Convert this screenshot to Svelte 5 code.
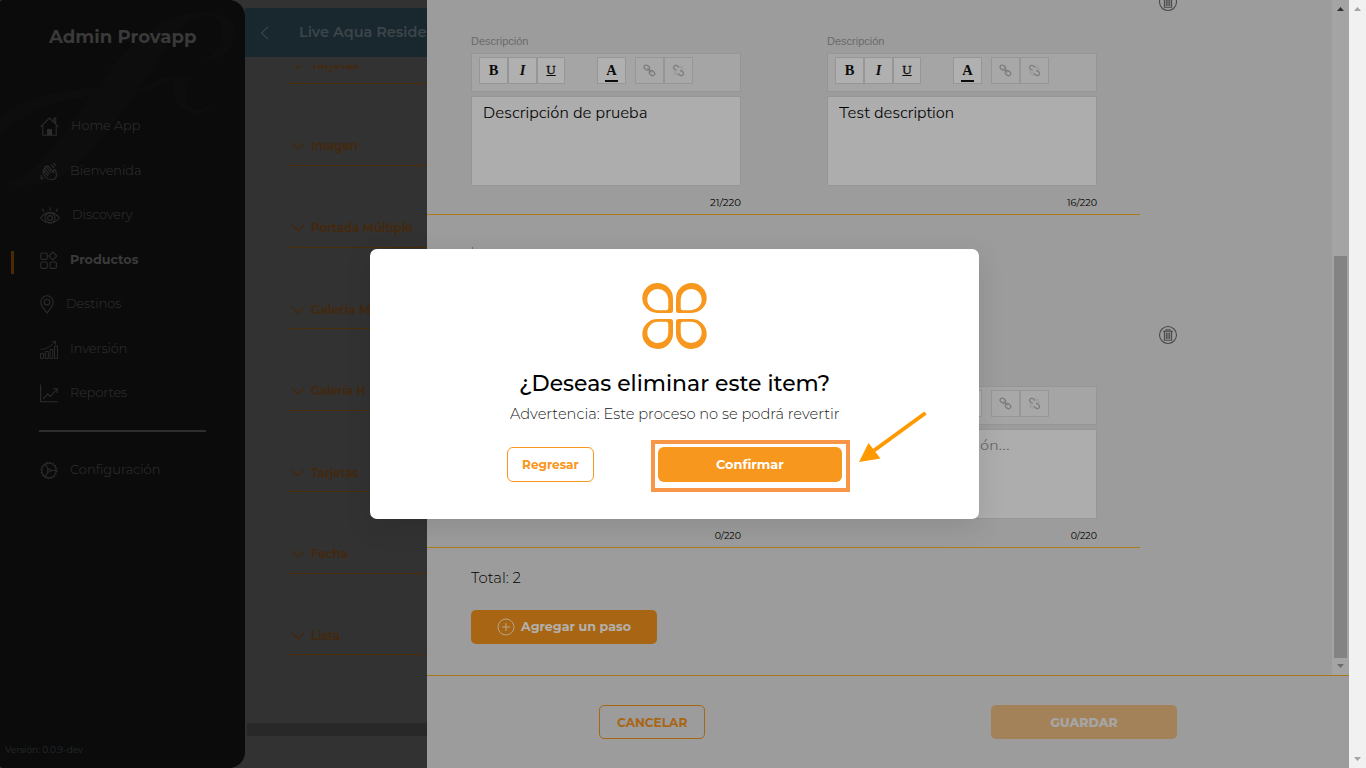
<script>
  const nav = [
    { icon: 'home', label: 'Home App', iconWidth: 19, width: 69 },
    { icon: 'hand', label: 'Bienvenida', iconWidth: 18, width: 71 },
    { icon: 'eye', label: 'Discovery', iconWidth: 20, width: 61 },
    { icon: 'grid', label: 'Productos', iconWidth: 18, width: 68.5, active: true },
    { icon: 'pin', label: 'Destinos', iconWidth: 14, width: 55 },
    { icon: 'bars', label: 'Inversión', iconWidth: 18, width: 57 },
    { icon: 'chart', label: 'Reportes', iconWidth: 18, width: 57 }
  ]

  const sections = [
    { label: 'Tarjetas', width: 48 },
    { label: 'Imagen', width: 47 },
    { label: 'Portada Múltiple', width: 102 },
    { label: 'Galería Múltiple', width: 100 },
    { label: 'Galería H', width: 55 },
    { label: 'Tarjetas', width: 48 },
    { label: 'Fecha', width: 37 },
    { label: 'Lista', width: 29 }
  ]

  const steps = [
    [
      { text: 'Descripción de prueba', width: 164, count: '21/220', countWidth: 31 },
      { text: 'Test description', width: 115, count: '16/220', countWidth: 30.5 }
    ],
    [
      { text: '', width: 0, count: '0/220', countWidth: 26 },
      { text: 'Ingrese la descripción...', width: 171, count: '0/220', countWidth: 26, placeholder: true }
    ]
  ]

  // stretches a label to its column width
  function fit(node, width) {
    const natural = node.offsetWidth
    if (!natural || !width) return
    node.style.transform = `scaleX(${width / natural})`
    node.style.marginRight = `${width - natural}px`
  }
</script>

{#snippet navIcon(name, width)}
  <svg class="nav-icon" {width} height="19" viewBox="0 0 {width} 19">
    {#if name === 'home'}
      <path d="M.5 9.8 9.5 1l9 8.8M2.8 9v9.3h13.4V9M14 4.8V1h1.7v5.5" />
      <path class="solid" d="M7 18v-6h5v6z" />
    {:else if name === 'hand'}
      <path d="M5.2 14.5C3.8 12.6 2.6 10.6 3 9.7c.5-.8 1.4.1 2 .9L8.3 14M5 10.5 3.5 7.8c-.3-1 .9-1.6 1.6-.6l4.2 5M5.2 7.3l-.6-2c.1-1.3 1.3-1.2 1.8-.3l4.7 5.7M7.2 6l-.4-1.7c.4-1 1.4-.5 1.9.3l5 6c.1-1.7-.2-2.7.7-3 1.5-.2 1.8 2.7 2 4.9.2 3-1.9 5-4.7 5.2-2.8.3-4.7-1-6.5-3.2" />
      <path d="M11 3.2c1.8.3 2.6 1.8 2.8 3M13 1.2c1.6.3 2.3 1.3 2.4 2.8M1 13c0 1.8 1 3 2.5 3.7M.7 15.2c.3 1 .7 1.6 1.5 2" />
    {:else if name === 'eye'}
      <path d="M.7 12C5 4.8 15 4.8 19.3 12 15 18.2 5 18.2.7 12zM10 1.2v3.5M2.3 2.7l1.8 3M17.7 2.7l-1.8 3" />
      <circle cx="10" cy="12" r="5" /><circle cx="10" cy="12" r="2.4" />
    {:else if name === 'grid'}
      <rect x=".8" y="2" width="6.4" height="6.4" rx="1.2" />
      <rect x=".8" y="11" width="6.4" height="6.4" rx="1.2" />
      <rect x="10" y="11" width="6.4" height="6.4" rx="1.2" />
      <path d="m12.8 1 4 4-4 4-4-4z" />
    {:else if name === 'pin'}
      <path d="M7 18C4.5 14.5.8 11 .8 7a6.2 6.2 0 0 1 12.4 0c0 4-3.7 7.5-6.2 11z" />
      <circle cx="7" cy="7" r="2.8" />
    {:else if name === 'bars'}
      <path class="fine" d="M.5 13.5h3v5h-3zM5.3 11.5h3v7h-3zM10 9.5h2.8v9H10zM14.5 6h3v12.5h-3zM.5 9.5C6 9.5 11 6 15.5 1.5M12.5 1.5h3v3" />
    {:else if name === 'chart'}
      <path d="M.6.5v17.3H18M3 15l4.8-5 2.5 2.5L17 5M13 4.8h4.2V9" />
    {:else}
      <circle cx="9" cy="9.5" r="7.2" />
      <circle cx="9" cy="9.5" r="8.1" stroke-dasharray="1.6 1.58" />
      <circle cx="9" cy="9.5" r="1.5" />
      <path d="M10.5 9.5h5.7M8.2 10.7l-2.9 5M8.2 8.2l-2.9-5" />
    {/if}
  </svg>
{/snippet}

{#snippet linkIcon(broken)}
  <svg width="13" height="13" viewBox="0 0 13 13" class="link-icon">
    {#if broken}
      <path d="M4.8 6C3 6.3 1.2 4.4 1.6 2.9 2.1 1 4.6.8 5.6 2.1L6.8 3.6M8 6.7c1.7-.3 3.8 1.5 3.4 3.2-.4 1.9-3 2.2-4.2.8L6 9.3" />
      <path class="thin" d="M8.5 4.5 11 2M8 3.5V1.3M9.5 5h2.5M4.5 8.5 2 11M5 9.5v2M3.5 8H1.3" />
    {:else}
      <rect x=".9" y="1.5" width="5.8" height="4.2" rx="2.1" transform="rotate(40 3.8 3.6)" />
      <rect x="6.1" y="7" width="5.8" height="4.2" rx="2.1" transform="rotate(40 9 9.1)" />
      <path d="m4.5 4.3 4 4" />
    {/if}
  </svg>
{/snippet}

{#snippet trash()}
  <svg class="trash" width="20" height="20" viewBox="0 0 20 20">
    <circle cx="10" cy="10" r="8.5" />
    <path d="M5 6.2h10M8 6V4.8h4V6M6.4 6.5v8.7h7.2V6.5M8.3 7.5v6.5M10 7.5v6.5M11.7 7.5v6.5" />
  </svg>
{/snippet}

<div class="window">
  <div class="stage">
    <aside class="sidebar">
      <svg class="swirl" width="245" height="200" viewBox="0 0 245 200">
        <path d="M0 184c30-4 48-30 66-54 34-46 60-92 108-113 20-9 61-8 62 15 0 16-16 31-36 31 14-6 22-18 22-30 0-13-10-19-22-17-23 5-43 50-64 77-26 34-60 92-104 92-12 1-22 1-32-1z" />
        <path d="M0 115c28-18 64-26 101-28l-6 8c-35 4-70 18-95 38zM144 86c18-9 35-13 54-9-12 2-14 12-12 22 3 13 20 15 27 1 0 14-18 18-30 9-11-8-11-20-9-28-13 2-23 10-38 12z" />
      </svg>
      <h1><span class="fit" use:fit={147}>Admin Provapp</span></h1>
      <nav>
        {#each nav as item}
          <a class="nav-item" class:active={item.active} href="#{item.icon}">
            {@render navIcon(item.icon, item.iconWidth)}
            <span class="fit" use:fit={item.width}>{item.label}</span>
          </a>
        {/each}
      </nav>
      <hr />
      <a class="nav-item" href="#config">
        {@render navIcon('gear', 18)}
        <span class="fit" use:fit={90}>Configuración</span>
      </a>
      <div class="version"><span class="fit" use:fit={78}>Versión: 0.0.9-dev</span></div>
    </aside>

    <main>
      <header>
        <svg width="9" height="14" viewBox="0 0 9 14"><path d="M8 .8 1.5 7 8 13.2" /></svg>
        <span class="fit" use:fit={162}>Live Aqua Residences</span>
      </header>
      <div class="list">
        <div class="list-inner">
          {#each sections as section}
            <div class="section">
              <svg width="14" height="8" viewBox="0 0 14 8"><path d="m1 1 6 6 6-6" /></svg>
              <span class="fit" use:fit={section.width}>{section.label}</span>
            </div>
          {/each}
        </div>
      </div>
      <div class="hscroll"></div>
    </main>

    <section class="panel">
      <div class="panel-body">
        <div class="panel-content">
          <div class="steps">
            {#each steps as step, i}
              <div class="step">
                <div class="fields">
                  {#if i === 1}<i class="label-top"></i>{/if}
                  {#each step as field}
                    <div class="field">
                      <div class="field-label"><span class="fit" use:fit={57}>Descripción</span></div>
                      <div class="toolbar">
                        <button class="b">B</button>
                        <button class="i">I</button>
                        <button class="u">U</button>
                        <button class="color"><span>A</span></button>
                        <button class="off">{@render linkIcon(false)}</button>
                        <button class="off">{@render linkIcon(true)}</button>
                      </div>
                      <div class="editor" class:placeholder={field.placeholder}>
                        <span class="fit" use:fit={field.width}>{field.text}</span>
                      </div>
                      <div class="count"><span class="fit" use:fit={field.countWidth}>{field.count}</span></div>
                    </div>
                  {/each}
                </div>
                {@render trash()}
              </div>
            {/each}
          </div>
          <div class="total"><span class="fit" use:fit={50}>Total: 2</span></div>
          <button class="add">
            <svg width="18" height="18" viewBox="0 0 18 18">
              <circle cx="9" cy="9" r="8" /><path d="M9 5v8M5 9h8" />
            </svg>
            <span class="fit" use:fit={110}>Agregar un paso</span>
          </button>
        </div>
        <div class="scrollbar">
          <svg class="arrow-up" width="7" height="4" viewBox="0 0 7 4"><path d="M0 4 3.5 0 7 4z" /></svg>
          <div class="thumb"></div>
          <svg class="arrow-down" width="7" height="4" viewBox="0 0 7 4"><path d="M0 0h7L3.5 4z" /></svg>
        </div>
      </div>
      <footer>
        <button class="cancel"><span class="fit" use:fit={70}>CANCELAR</span></button>
        <button class="save"><span class="fit" use:fit={68}>GUARDAR</span></button>
      </footer>
    </section>
  </div>

  <div class="page-scroll">
    <svg width="7" height="4" viewBox="0 0 7 4"><path d="M0 4 3.5 0 7 4z" /></svg>
    <svg width="7" height="4" viewBox="0 0 7 4"><path d="M0 0h7L3.5 4z" /></svg>
  </div>

  <div class="dialog" role="dialog">
    <svg class="logo" width="65" height="66" viewBox="0 0 65 66">
      <defs>
        <path id="petal" fill-rule="evenodd" d="M15.5 0A15.5 15.5 0 0 1 31 15.5V27.5Q31 30 28.5 30H15.5A15.2 15 0 0 1 15.5 0zM16 6A10.7 10.6 0 0 0 16 27.2H24Q26.3 27.2 26.3 25V16.3A10.3 10.3 0 0 0 16 6z" />
      </defs>
      <use href="#petal" />
      <use href="#petal" transform="matrix(-1 0 0 1 65 0)" />
      <use href="#petal" transform="matrix(1 0 0 -1 0 66)" />
      <use href="#petal" transform="matrix(-1 0 0 -1 65 66)" />
    </svg>
    <h2><span class="fit" use:fit={311}>¿Deseas eliminar este item?</span></h2>
    <p><span class="fit" use:fit={330}>Advertencia: Este proceso no se podrá revertir</span></p>
    <div class="actions">
      <button class="back"><span class="fit" use:fit={57}>Regresar</span></button>
      <button class="confirm"><span class="fit" use:fit={68}>Confirmar</span></button>
    </div>
  </div>

  <div class="highlight"></div>
  <svg class="pointer" width="72" height="54" viewBox="0 0 72 54">
    <path class="shaft" d="M68.5 3 17 40.5" />
    <path class="head" d="M2 52 11.5 33 23.5 48.5z" />
  </svg>
</div>

<style>
  :global(body) { overflow: hidden; }
  .window { position: relative; width: 1366px; height: 768px; display: flex; overflow: hidden; font-family: Montserrat, Inter, sans-serif; }
  .window * { box-sizing: border-box; }
  button { padding: 0; border: 0; font-family: inherit; display: flex; align-items: center; justify-content: center; }
  svg { flex: none; display: block; }
  .fit { display: inline-block; white-space: nowrap; transform-origin: left center; }

  .stage { width: 1349px; display: flex; background: #323232; }

  .sidebar { position: relative; width: 245px; height: 768px; display: flex; flex-direction: column; background: #0b0b0b; border-radius: 3px 16px 16px 3px; overflow: hidden; }
  .swirl { position: absolute; top: 0; left: 0; fill: #0d0d0d; }
  .sidebar h1 { position: relative; margin: 25px 0 0 49px; font-size: 18px; line-height: 24px; font-weight: 700; color: #393939; }
  nav { position: relative; margin-top: 54px; }
  .nav-item { display: flex; align-items: center; gap: 12px; height: 44.5px; padding-left: 40px; font-size: 13px; font-weight: 300; color: #333; text-decoration: none; }
  .nav-item.active { font-weight: 700; color: #3a3a3a; padding-left: 11px; }
  .nav-item.active::before { content: ''; width: 3px; height: 23px; margin: 8px 14px 0 0; background: #4a2a04; }
  .nav-icon { margin-top: 3px; fill: none; stroke: #2c2c2c; stroke-width: 1.1; }
  .nav-icon .solid { fill: #2c2c2c; stroke: none; }
  .nav-icon .fine { stroke-width: .9; }
  hr { width: 167px; height: 2px; margin: 15.5px 0 0 39px; border: 0; background: #2e2e2e; flex: none; }
  hr + .nav-item { margin-top: 15px; }
  .version { margin: auto 0 11px 4.5px; font-size: 9.5px; line-height: 14px; font-weight: 400; color: #262c30; }

  main { width: 182px; padding-top: 8px; overflow: hidden; display: flex; flex-direction: column; }
  header { flex: none; display: flex; align-items: center; gap: 30px; height: 49px; padding: 0 0 2px 15px; background: #19282f; color: #3c4549; font-size: 15px; font-weight: 600; }
  header svg { margin-top: 2px; fill: none; stroke: #3c4549; stroke-width: 1.1; }
  .list { margin-top: 8px; height: 655px; overflow: hidden; flex: none; }
  .list-inner { margin-top: -62.12px; padding-left: 44px; }
  .section { width: 400px; height: 81.55px; padding: 0 0 10.5px 2px; display: flex; align-items: flex-end; gap: 6px; border-bottom: 1px solid #4a2b06; font-size: 12.5px; line-height: 17px; font-weight: 600; color: #452709; }
  .section svg { margin-bottom: 4px; fill: none; stroke: #452709; stroke-width: 1.2; }
  .hscroll { margin: 3px 0 0 2px; height: 13px; background: #282828; }

  .panel { width: 922px; background: #9c9c9c; display: flex; flex-direction: column; }
  .panel-body { height: 675px; display: flex; overflow: hidden; }
  .panel-content { width: 905px; }
  .steps { margin-top: -118px; }
  .step { display: flex; align-items: flex-start; height: 333px; }
  .fields { position: relative; width: 713px; height: 333px; padding: 0 0 0 44px; display: flex; align-items: flex-end; gap: 86px; border-bottom: 1px solid #ae7a1c; }
  .label-top { position: absolute; left: 45px; top: 32px; width: 1px; height: 3px; background: #707070; }
  .field { width: 270px; display: flex; flex-direction: column; }
  .field-label { height: 19px; font-family: "Liberation Sans", Arial, sans-serif; font-size: 11px; line-height: 14px; color: #6a6a6a; }
  .toolbar { height: 39px; padding: 3px 7px; display: flex; background: #a5a5a5; border: 1px solid #969696; }
  .toolbar button { width: 29px; height: 27px; background: #b0b0b0; border: 1px solid #969696; font-family: "Liberation Serif", serif; font-size: 14.5px; font-weight: 700; color: #0c0c0c; padding-bottom: 1px; }
  .toolbar .i { font-style: italic; }
  .toolbar .u { width: 28px; font-size: 13px; font-weight: 400; text-decoration: underline; -webkit-text-stroke: 0.3px #0c0c0c; }
  .toolbar .color { margin: 0 9px 0 32px; padding: 0; }
  .color span { height: 20px; line-height: 16px; width: 13px; margin-top: 2px; border-bottom: 2px solid #0c0c0c; }
  .toolbar .off { background: #a8a8a8; }
  .link-icon { fill: none; stroke: #7a7a7a; stroke-width: 1.2; }
  .link-icon .thin { stroke-width: .7; stroke: #8c8c8c; }
  .editor { height: 90px; margin-top: 4px; padding: 6px 11px; background: #adadad; border: 1px solid #969696; font-family: "Nunito Sans", Montserrat, Lato, sans-serif; font-size: 15px; line-height: 20px; font-weight: 300; color: #000; }
  .placeholder { padding-top: 5px; font-size: 14.5px; color: #606468; }
  .count { height: 28px; padding-top: 10px; font-size: 9.5px; line-height: 13px; font-weight: 400; color: #000; text-align: right; }
  .trash { margin: 110px 0 0 18px; fill: none; stroke: #4a4a4a; stroke-width: 1.1; }
  .total { margin: 20px 0 0 43.5px; font-size: 14.5px; line-height: 20px; font-weight: 300; color: #000; }
  .add { width: 186px; height: 34px; margin: 22px 0 0 44px; gap: 6px; border-radius: 5px; background: #a86614; color: #b3b0ad; font-size: 13px; font-weight: 700; }
  .add .fit { margin-top: -2px; }
  .add svg { fill: none; stroke: #b8a489; stroke-width: 1; }

  .scrollbar { width: 17px; height: 675px; background: #a4a4a4; display: flex; flex-direction: column; align-items: center; }
  .arrow-up { margin-top: 7px; fill: #333; }
  .thumb { width: 13px; height: 402px; margin-top: 245px; background: #838383; }
  .arrow-down { margin-top: 6px; fill: #6a6a6a; }

  footer { flex: 1; padding: 29px 0 0 172px; display: flex; align-items: flex-start; gap: 286px; border-top: 1px solid #a8741c; }
  footer button { height: 34px; font-size: 12.5px; border-radius: 5px; }
  .cancel { width: 106px; background: none; border: 1px solid #a86614; color: #a86614; font-weight: 700; }
  .save { width: 186px; background: #a38259; color: #a6a5a4; font-weight: 800; }

  .page-scroll { width: 17px; padding: 7px 0; display: flex; flex-direction: column; justify-content: space-between; align-items: center; background: #f1f1f1; }
  .page-scroll svg { fill: #a3a3a3; }

  .dialog { position: absolute; left: 370px; top: 249px; width: 609px; height: 270px; padding-top: 34px; display: flex; flex-direction: column; align-items: center; background: #fff; border-radius: 7px; box-shadow: 0 8px 28px rgba(0, 0, 0, 0.1); }
  .logo { fill: #f8971d; }
  .dialog h2 { margin: 19px 0 0; font-size: 21.5px; line-height: 30px; font-weight: 500; color: #000; }
  .dialog p { margin: 6px 0 0; font-size: 14.5px; line-height: 20px; font-weight: 300; color: #222; }
  .actions { display: flex; gap: 64px; margin-top: 23px; }
  .actions button { height: 35px; border-radius: 6px; font-size: 12.5px; font-weight: 700; }
  .back { width: 87px; background: #fff; border: 1px solid #f8971d; color: #f8971d; }
  .confirm { width: 184px; background: #f8971d; color: #fff; }

  .highlight { position: absolute; left: 651px; top: 440px; width: 199px; height: 52px; border: 4px solid #f79646; }
  .pointer { position: absolute; left: 857px; top: 410px; }
  .shaft { fill: none; stroke: #f90; stroke-width: 4; }
  .head { fill: #f90; }
</style>
